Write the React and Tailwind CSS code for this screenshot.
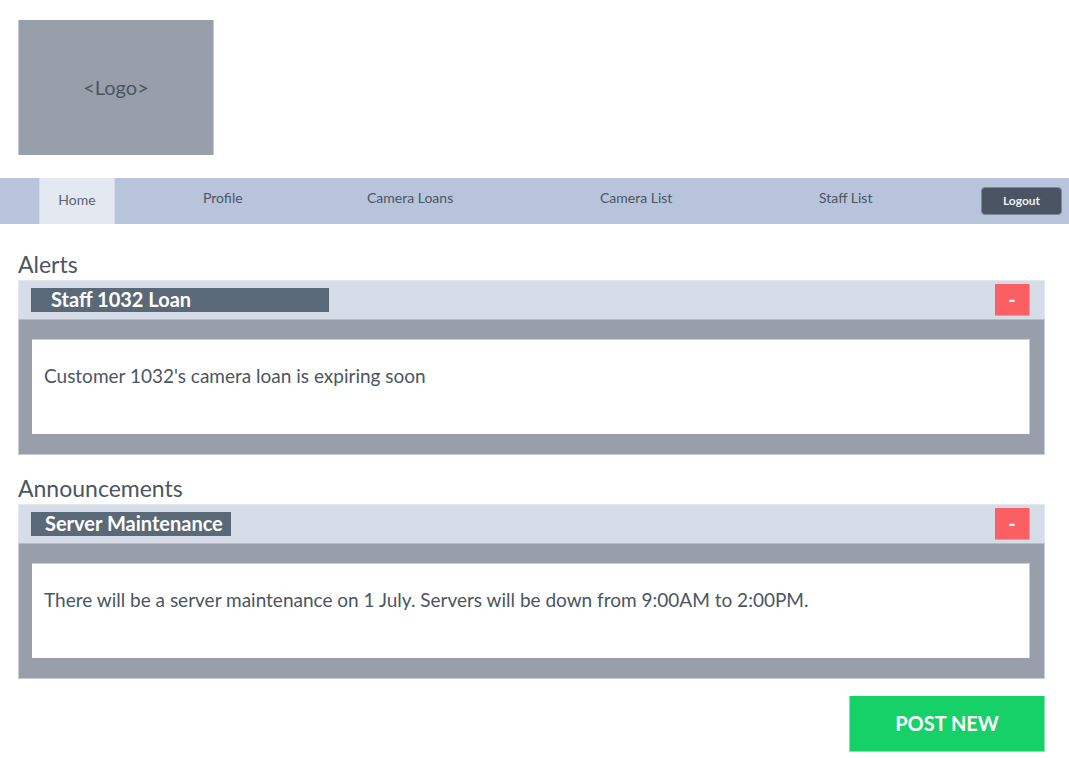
const links = ["Profile", "Camera Loans", "Camera List", "Staff List"];

function Panel({ heading, title, titleBox, children }) {
  return (
    <section>
      <h2 className="text-[23px] leading-8">{heading}</h2>
      <header className="flex h-[39px] items-center justify-between border border-b-0 border-[#e3e8ef] bg-[#d6dde8] pl-3 pr-[14px]">
        <h3 className={`bg-[#5a6978] pb-0.5 text-xl leading-[22px] font-bold text-white ${titleBox}`}>{title}</h3>
        <button type="button" aria-label={`Dismiss ${title}`} className="h-8 w-[35px] border-r border-b border-[#fa9093] bg-[#fa5f63] pb-0.5 text-xl leading-7 font-bold text-white">
          -
        </button>
      </header>
      <div className="border border-[#c9cdd5] border-t-[#b4bac6] bg-[#989eaa] pt-[19px] pr-[14px] pb-5 pl-[13px]">
        <p className="min-h-[95px] border-t border-r border-[#c9cdd5] bg-white px-3 pt-5 pb-6 text-[19px] leading-8">{children}</p>
      </div>
    </section>
  );
}

export default function App() {
  return (
    <div className="bg-white font-['Lato',sans-serif] text-[#4a5662]">
      <div className="px-[18px] pt-5 pb-[23px]">
        <div className="flex h-[135px] w-[196px] items-center justify-center border-x border-[#c3c7ce] bg-[#989eaa] pb-0.5 text-xl">&lt;Logo&gt;</div>
      </div>

      <nav className="grid h-[46px] grid-cols-[164fr_164fr_233fr_219fr_162fr_81fr] bg-[#b8c3dc] pr-[7px] pl-[39px] text-sm leading-5">
        <a href="#home" aria-current="page" className="flex w-[76px] items-center justify-center border-x border-[#d6dcea] bg-[#e4e8f1] pb-0.5 text-[#5c6470]">
          Home
        </a>
        {links.map((label) => (
          <a key={label} href={`#${label.toLowerCase().replace(" ", "-")}`} className="justify-self-start pt-[10px]">
            {label}
          </a>
        ))}
        <button type="button" className="h-7 self-center rounded-[4px] border border-[#7e889b] bg-[#4a5462] text-xs font-bold text-[#eef0f4]">
          Logout
        </button>
      </nav>

      <main className="flex flex-col gap-[17px] pt-6 pr-6 pb-2 pl-[18px]">
        <Panel heading="Alerts" title="Staff 1032 Loan" titleBox="w-[298px] max-w-full pl-5">
          Customer 1032's camera loan is expiring soon
        </Panel>
        <Panel heading="Announcements" title="Server Maintenance" titleBox="pr-2 pl-[14px]">
          There will be a server maintenance on 1 July. Servers will be down from 9:00AM to 2:00PM.
        </Panel>
        <button type="button" className="h-14 w-[196px] self-end border border-t-0 border-[#83e6ac] bg-[#16d068] pb-0.5 text-xl font-bold text-white">
          POST NEW
        </button>
      </main>
    </div>
  );
}
